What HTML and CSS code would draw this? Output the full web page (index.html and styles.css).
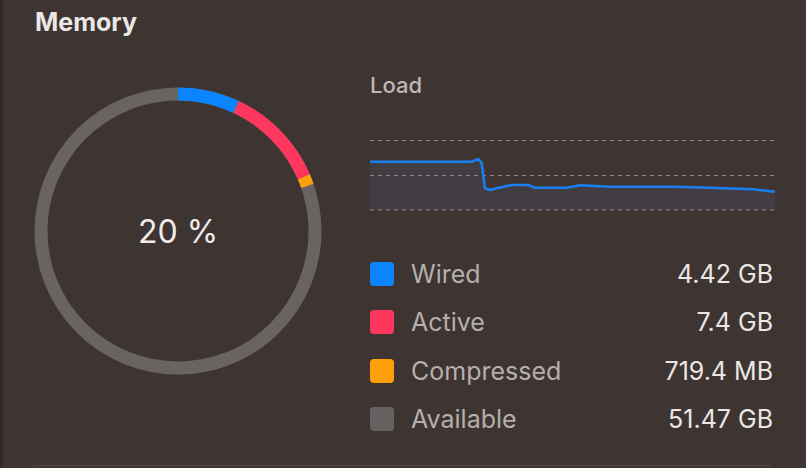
FILE: index.html
```html
<!DOCTYPE html>
<html>
<head>
<meta charset="utf-8">
<link rel="stylesheet" href="styles.css">
</head>
<body>
  <h1 class="title">Memory</h1>
  <div class="main">
    <div class="donut">
      <svg class="ring" width="290" height="290" viewBox="0 0 290 290">
        <circle cx="145" cy="145" r="137" fill="none" stroke="#696462" stroke-width="13"/>
        <g transform="rotate(-90 145 145)">
          <circle cx="145" cy="145" r="137" fill="none" stroke="#0a84ff" stroke-width="13" stroke-dasharray="60 900" stroke-dashoffset="0"/>
          <circle cx="145" cy="145" r="137" fill="none" stroke="#ff375f" stroke-width="13" stroke-dasharray="99.5 900" stroke-dashoffset="-60"/>
          <circle cx="145" cy="145" r="137" fill="none" stroke="#ff9f0a" stroke-width="13" stroke-dasharray="9.7 900" stroke-dashoffset="-159.5"/>
        </g>
      </svg>
      <div class="pct">20 %</div>
    </div>
    <div class="side">
      <div class="load">Load</div>
      <svg class="chart" width="405" height="75" viewBox="0 0 405 75">
        <path d="M0 24.7 L101.7 24.7 L108.3 22 L111.7 26 L115 51.3 L120 53 L126.7 51.3 L141.7 48 L158.3 48 L165 50.7 L196.7 50.7 L210 48.3 L240 49.7 L306.7 49.7 L340 50.7 L383 52.3 L405 54.7 L405 73 L0 73 Z" fill="#423d42"/>
        <line x1="0" y1="3.5" x2="405" y2="3.5" stroke="#8d8785" stroke-width="1.2" stroke-dasharray="4 4"/>
        <line x1="0" y1="38.5" x2="405" y2="38.5" stroke="#8d8785" stroke-width="1.2" stroke-dasharray="4 4"/>
        <line x1="0" y1="73" x2="405" y2="73" stroke="#8d8785" stroke-width="1.2" stroke-dasharray="4 4"/>
        <path d="M0 24.7 L101.7 24.7 L108.3 22 L111.7 26 L115 51.3 L120 53 L126.7 51.3 L141.7 48 L158.3 48 L165 50.7 L196.7 50.7 L210 48.3 L240 49.7 L306.7 49.7 L340 50.7 L383 52.3 L405 54.7" fill="none" stroke="#1a80f2" stroke-width="2.6" stroke-linejoin="round"/>
      </svg>
      <ul class="legend">
        <li class="row"><span class="swatch wired"></span><span class="label">Wired</span><span class="value">4.42 GB</span></li>
        <li class="row"><span class="swatch active"></span><span class="label">Active</span><span class="value">7.4 GB</span></li>
        <li class="row"><span class="swatch compressed"></span><span class="label">Compressed</span><span class="value">719.4 MB</span></li>
        <li class="row"><span class="swatch available"></span><span class="label">Available</span><span class="value">51.47 GB</span></li>
      </ul>
    </div>
  </div>
  <div class="divider"></div>
</body>
</html>
```
FILE: styles.css
```css
* { box-sizing: border-box; }
html, body { margin: 0; padding: 0; }
body {
  width: 806px;
  height: 468px;
  background: #3e3533;
  border-left: 3px solid #322a28;
  padding-top: 7px;
  font-family: Inter, "Noto Sans", "Liberation Sans", sans-serif;
  color: #ebe7e5;
  display: flex;
  flex-direction: column;
  overflow: hidden;
}
.title {
  margin: 0 0 0 32px;
  font-size: 25px;
  line-height: 30px;
  font-weight: 700;
  color: #ebe7e5;
}
.main {
  display: flex;
  align-items: flex-start;
  margin-top: 35px;
}
.donut {
  display: grid;
  margin: 14px 0 0 30px;
  width: 290px;
  height: 290px;
}
.ring, .pct { grid-area: 1 / 1; }
.pct {
  align-self: center;
  justify-self: center;
  font-size: 32px;
  font-weight: 400;
  color: #f0ecea;
}
.side {
  margin-left: 47px;
  width: 405px;
  display: flex;
  flex-direction: column;
}
.load {
  font-size: 22px;
  line-height: 26px;
  font-weight: 500;
  color: #bfb8b5;
}
.chart { display: block; margin-top: 39px; }
.legend {
  list-style: none;
  margin: 38px 0 0 0;
  padding: 0;
}
.row {
  height: 48.3px;
  display: flex;
  align-items: center;
}
.swatch {
  width: 24px;
  height: 24px;
  border-radius: 4px;
  margin-right: 17px;
}
.wired { background: #0a84ff; }
.active { background: #ff375f; }
.compressed { background: #ff9f0a; }
.available { background: #666261; }
.label {
  flex: 1;
  font-size: 25px;
  color: #b5afac;
}
.value {
  font-size: 25px;
  color: #ebe7e5;
  margin-right: 2px;
}
.divider {
  margin: auto 34px 2px 30px;
  border-top: 1px solid #4f4745;
}
```
